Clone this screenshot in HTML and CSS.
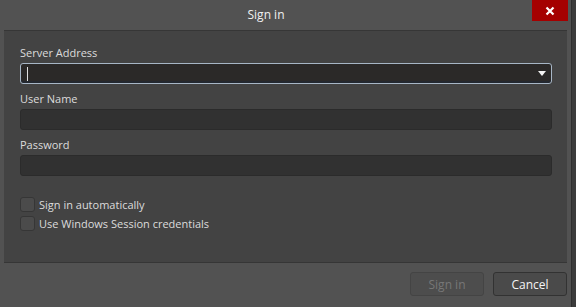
FILE: index.html
```html
<!DOCTYPE html>
<html lang="en">
<head>
  <meta charset="UTF-8" />
  <title>Sign in</title>
  <link rel="stylesheet" href="styles.css">
</head>
<body>
  <div class="dialog">
    <div class="titlebar">
      <span class="title">Sign in</span>
      <button class="close-btn" aria-label="Close">
        <svg width="10" height="10" viewBox="0 0 10 10"><path d="M1.5 1.5 L8.5 8.5 M8.5 1.5 L1.5 8.5" stroke="#fff" stroke-width="2.2" fill="none"/></svg>
      </button>
    </div>

    <div class="panel">
      <label class="field-label">Server Address</label>
      <div class="field field-focus">
        <span class="caret"></span>
        <span class="drop-arrow"></span>
      </div>

      <label class="field-label">User Name</label>
      <div class="field"></div>

      <label class="field-label">Password</label>
      <div class="field"></div>

      <div class="checks">
        <div class="check-row"><span class="checkbox"></span>Sign in automatically</div>
        <div class="check-row"><span class="checkbox"></span>Use Windows Session credentials</div>
      </div>
    </div>

    <div class="footer">
      <button class="btn btn-disabled">Sign in</button>
      <button class="btn">Cancel</button>
    </div>
  </div>
</body>
</html>
```

FILE: styles.css
```css
* { margin: 0; padding: 0; box-sizing: border-box; }
body { background-color: #3c3c3c; font-family: 'Open Sans', 'Noto Sans', sans-serif; font-size: 11px; color: #dcdcdc; width: 576px; height: 307px; overflow: hidden; }

.dialog {
  width: 572px;
  height: 307px;
  background-color: #525252;
  border-right: 1px solid #2f2f2f;
  display: flex;
  flex-direction: column;
}

.titlebar {
  height: 30px;
  display: flex;
  align-items: flex-start;
  padding-right: 3px;
}

.title {
  flex: 1;
  text-align: center;
  line-height: 30px;
  font-size: 12px;
  color: #f0f0f0;
}

.close-btn {
  width: 36px;
  height: 21px;
  background-color: #a50000;
  border: none;
  display: flex;
  align-items: center;
  justify-content: center;
}

.panel {
  margin: 0 4px;
  height: 233px;
  background-color: #434343;
  border-top: 1px solid #363636;
  border-bottom: 1px solid #363636;
  padding: 14px 15px 0 16px;
  display: flex;
  flex-direction: column;
}

.field-label {
  display: block;
  line-height: 16px;
  margin-bottom: 2px;
}

.field-label + .field { margin-bottom: 7px; }

.field {
  height: 21px;
  background-color: #313131;
  border: 1px solid #2b2b2b;
  border-radius: 3px;
  position: relative;
}

.field-focus {
  background-color: #2b2928;
  border-color: #a7b6c6;
  box-shadow: inset 0 -2px 0 #232830;
}

.caret {
  position: absolute;
  left: 6px;
  top: 3px;
  width: 1px;
  height: 14px;
  background-color: #e0e0e0;
}

.drop-arrow {
  position: absolute;
  right: 5px;
  top: 7px;
  width: 0;
  height: 0;
  border-left: 4px solid transparent;
  border-right: 4px solid transparent;
  border-top: 5px solid #f4f4f4;
}

.checks {
  margin-top: 14px;
  display: flex;
  flex-direction: column;
  gap: 4px;
}

.check-row {
  display: flex;
  align-items: center;
  gap: 4px;
  line-height: 15px;
}

.checkbox {
  width: 15px;
  height: 15px;
  background-color: #4b4b4b;
  border: 1px solid #363636;
  border-radius: 3px;
}

.footer {
  flex: 1;
  display: flex;
  justify-content: flex-end;
  gap: 9px;
  padding: 9px 4px 0 0;
}

.btn {
  width: 74px;
  height: 24px;
  background-color: #4a4a4a;
  border: 1px solid #323232;
  border-radius: 3px;
  font-family: inherit;
  font-size: 12px;
  color: #f4f4f4;
}

.btn-disabled {
  background-color: #4d4d4d;
  border-color: #444;
  color: #777;
}
```
